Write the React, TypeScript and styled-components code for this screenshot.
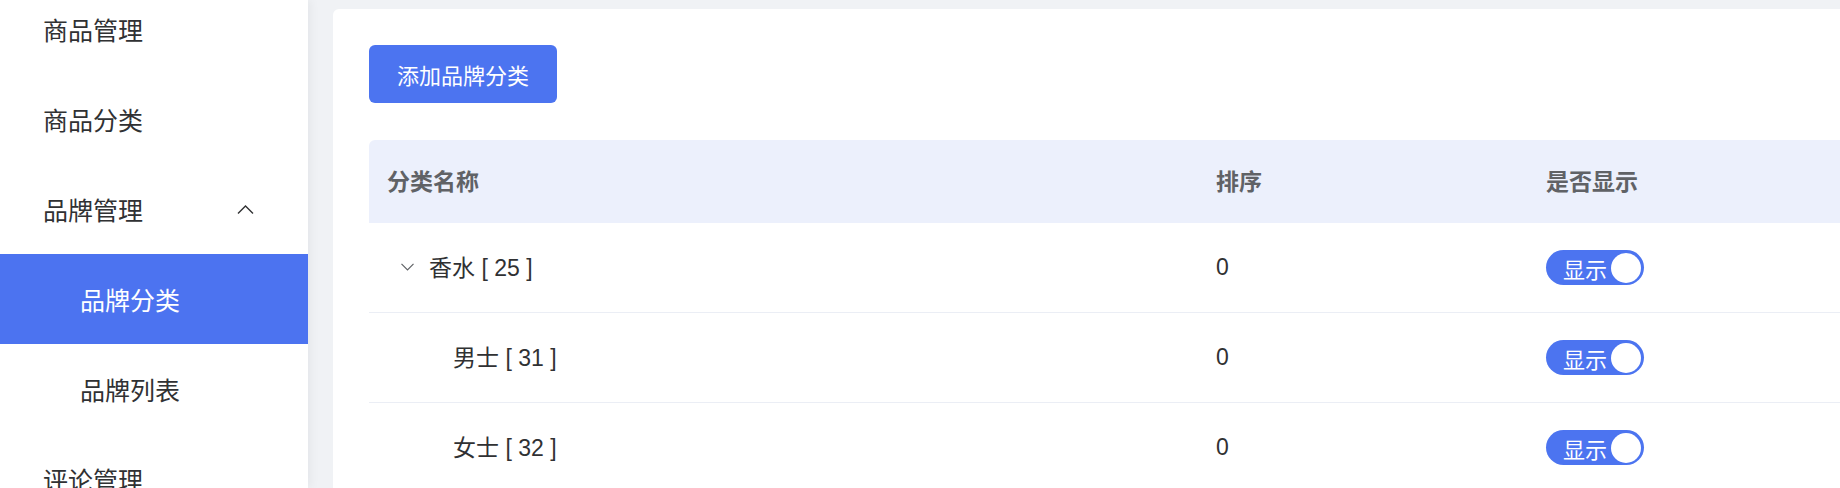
import React from 'react';
import styled, { createGlobalStyle } from 'styled-components';

const GlobalStyle = createGlobalStyle`
  html, body {
    margin: 0;
    padding: 0;
    height: 100%;
    overflow: hidden;
    background: #f0f2f5;
    font-family: "Liberation Sans", "Noto Sans CJK SC", sans-serif;
  }

  #root {
    height: 100%;
  }
`;

const Layout = styled.div`
  display: flex;
  height: 100vh;
`;

const Sidebar = styled.aside`
  width: 308px;
  flex-shrink: 0;
  background: #fff;
  overflow: hidden;
  box-shadow: 2px 0 10px rgba(0, 21, 41, 0.06);
  position: relative;
  z-index: 1;
`;

const Menu = styled.ul`
  list-style: none;
  margin: -16px 0 0 0;
  padding: 0;
`;

const MenuItem = styled.li<{ $sub?: boolean; $active?: boolean }>`
  height: 90px;
  display: flex;
  align-items: center;
  justify-content: space-between;
  padding: 0 54px 0 ${({ $sub }) => ($sub ? '80px' : '43px')};
  font-size: 25px;
  color: ${({ $active }) => ($active ? '#fff' : '#303133')};
  background: ${({ $active }) => ($active ? '#4c73f0' : 'transparent')};
`;

const Main = styled.main`
  flex: 1;
  min-width: 0;
  padding: 9px 0 0 25px;
  display: flex;
`;

const Card = styled.section`
  flex: 1;
  background: #fff;
  border-radius: 6px 0 0 0;
  padding: 36px 0 0 36px;
`;

const PrimaryButton = styled.button`
  height: 58px;
  padding: 0 28px;
  border: none;
  border-radius: 6px;
  background: #4c74f0;
  color: #fff;
  font-family: inherit;
  font-size: 22px;
  cursor: pointer;
`;

const Table = styled.div`
  margin-top: 37px;
`;

const Row = styled.div<{ $head?: boolean }>`
  display: grid;
  grid-template-columns: 829px 330px 1fr;
  align-items: center;
  height: ${({ $head }) => ($head ? '83px' : '89px')};
  background: ${({ $head }) => ($head ? '#ecf0fc' : '#fff')};
  border-radius: ${({ $head }) => ($head ? '6px 0 0 0' : '0')};
  border-bottom: ${({ $head }) => ($head ? 'none' : '1px solid #ebeef5')};
`;

const HeadCell = styled.div`
  padding: 0 0 4px 18px;
  font-size: 23px;
  font-weight: 700;
  color: #606266;
`;

const Cell = styled.div`
  display: flex;
  align-items: center;
  padding-left: 18px;
  font-size: 23px;
  color: #303133;
`;

const NameCell = styled(Cell)<{ $indent: number }>`
  padding-left: ${({ $indent }) => 18 + $indent}px;
  padding-bottom: 3px;
`;

const ExpandIcon = styled.svg`
  width: 13px;
  height: 8px;
  margin: 2px 15px 0 14px;
`;

const Switch = styled.div`
  width: 98px;
  height: 35px;
  box-sizing: border-box;
  border-radius: 18px;
  background: #4c74f0;
  display: flex;
  align-items: center;
  justify-content: space-between;
  padding: 0 3px 0 17px;
  color: #fff;
  font-size: 22px;
`;

const Knob = styled.span`
  width: 30px;
  height: 30px;
  border-radius: 50%;
  background: #fff;
`;

const ArrowUp = () => (
  <svg width="17" height="9" viewBox="0 0 17 9" fill="none">
    <path d="M1 8.5 L8.5 1 L16 8.5" stroke="#303133" strokeWidth="1.4" />
  </svg>
);

const rows = [
  { name: '香水 [ 25 ]', sort: 0, parent: true },
  { name: '男士 [ 31 ]', sort: 0, parent: false },
  { name: '女士 [ 32 ]', sort: 0, parent: false },
];

const App: React.FC = () => {
  return (
    <>
      <GlobalStyle />
      <Layout>
        <Sidebar>
          <Menu>
            <MenuItem>商品管理</MenuItem>
            <MenuItem>商品分类</MenuItem>
            <MenuItem>
              品牌管理
              <ArrowUp />
            </MenuItem>
            <MenuItem $sub $active>品牌分类</MenuItem>
            <MenuItem $sub>品牌列表</MenuItem>
            <MenuItem>评论管理</MenuItem>
          </Menu>
        </Sidebar>
        <Main>
          <Card>
            <PrimaryButton>添加品牌分类</PrimaryButton>
            <Table>
              <Row $head>
                <HeadCell>分类名称</HeadCell>
                <HeadCell>排序</HeadCell>
                <HeadCell>是否显示</HeadCell>
              </Row>
              {rows.map((row) => (
                <Row key={row.name}>
                  <NameCell $indent={row.parent ? 0 : 66}>
                    {row.parent && (
                      <ExpandIcon viewBox="0 0 13 8" fill="none">
                        <path d="M0.5 0.8 L6.5 6.8 L12.5 0.8" stroke="#606266" strokeWidth="1.2" />
                      </ExpandIcon>
                    )}
                    {row.name}
                  </NameCell>
                  <Cell>{row.sort}</Cell>
                  <Cell>
                    <Switch>
                      显示
                      <Knob />
                    </Switch>
                  </Cell>
                </Row>
              ))}
            </Table>
          </Card>
        </Main>
      </Layout>
    </>
  );
};

export default App;
